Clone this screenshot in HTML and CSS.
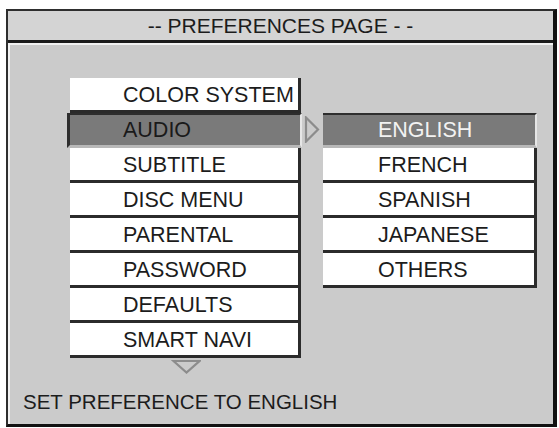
FILE: index.html
```html
<!DOCTYPE html>
<html>
<head>
<meta charset="utf-8">
<link rel="stylesheet" href="styles.css">
</head>
<body>
<div class="screen">
  <div class="header">-- PREFERENCES PAGE - -</div>
  <div class="panel">
    <div class="menus">
      <div class="col-left">
        <div class="row">COLOR SYSTEM</div>
        <div class="row row-active">AUDIO</div>
        <div class="row">SUBTITLE</div>
        <div class="row">DISC MENU</div>
        <div class="row">PARENTAL</div>
        <div class="row">PASSWORD</div>
        <div class="row">DEFAULTS</div>
        <div class="row">SMART NAVI</div>
        <svg class="down" width="30" height="16" viewBox="0 0 30 16"><polygon points="2.5,2 28.5,2 15.5,13.5" fill="none" stroke="#8c8c8c" stroke-width="2.2" stroke-linejoin="miter"/></svg>
      </div>
      <div class="col-arrow">
        <svg class="right" width="16" height="27" viewBox="0 0 16 27"><polygon points="2,1.5 14,13.5 2,25.5" fill="none" stroke="#8c8c8c" stroke-width="2.2"/></svg>
      </div>
      <div class="col-right">
        <div class="row sub sub-active">ENGLISH</div>
        <div class="row sub">FRENCH</div>
        <div class="row sub">SPANISH</div>
        <div class="row sub">JAPANESE</div>
        <div class="row sub">OTHERS</div>
      </div>
    </div>
    <div class="status">SET PREFERENCE TO ENGLISH</div>
  </div>
</div>
</body>
</html>
```
FILE: styles.css
```css
* { box-sizing: border-box; }
html, body { margin: 0; padding: 0; background: #ffffff; }
body {
  font-family: "Liberation Sans", Arial, sans-serif;
  color: #1c1c1c;
}
.screen {
  margin: 9px 0 0 6px;
  width: 551px;
  height: 418px;
  border-top: 2px solid #2e2e2e;
  border-left: 2px solid #2e2e2e;
  border-right: 4px solid #111111;
  border-bottom: 3px solid #111111;
  display: flex;
  flex-direction: column;
  background: #cbcbcb;
}
.header {
  height: 32px;
  background: #d4d4d4;
  border-bottom: 3px solid #1c1c1c;
  text-align: center;
  font-size: 21px;
  line-height: 28px;
  padding-top: 1px;
}
.panel {
  flex: 1;
  background: #cbcbcb;
  border-top: 2px solid #f2f2f2;
  border-left: 2px solid #f2f2f2;
  display: flex;
  flex-direction: column;
}
.menus {
  display: flex;
  margin-top: 33px;
  padding-left: 60px;
}
.col-left {
  width: 231px;
  display: flex;
  flex-direction: column;
}
.col-arrow {
  width: 22px;
}
.col-right {
  width: 214px;
  margin-top: 35px;
  display: flex;
  flex-direction: column;
}
.row {
  height: 35px;
  background: #ffffff;
  border-right: 3px solid #2b2b2b;
  border-bottom: 3px solid #2b2b2b;
  font-size: 21.5px;
  line-height: 28px;
  padding-top: 3px;
  padding-left: 53px;
  white-space: nowrap;
}
.row-active {
  background: #7a7a7a;
  border-top: 2px solid #2e2e2e;
  border-left: 3px solid #2e2e2e;
  border-right: 2px solid #e6e6e6;
  border-bottom: 3px solid #b8b8b8;
  margin-left: -3px;
  width: calc(100% + 4px);
  padding-top: 1px;
  color: #1a1a1a;
}
.sub { padding-left: 55px; }
.sub-active {
  background: #7a7a7a;
  border-top: 2px solid #2e2e2e;
  border-right: 2px solid #e6e6e6;
  border-bottom: 3px solid #b8b8b8;
  padding-top: 1px;
  color: #f2f2f2;
}
.down {
  display: block;
  margin: 1px auto 0;
}
.right {
  display: block;
  margin: 38px 0 0 3px;
}
.status {
  margin-top: 15px;
  padding-left: 13px;
  font-size: 20.5px;
  line-height: 24px;
  white-space: nowrap;
}
```
